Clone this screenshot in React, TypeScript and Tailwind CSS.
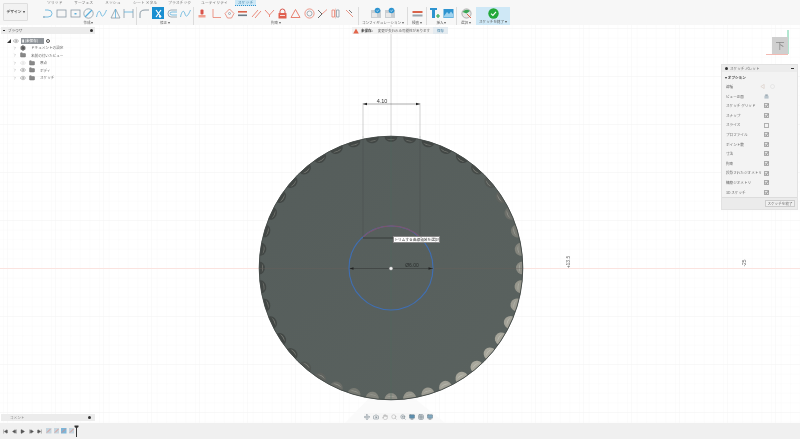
import React from 'react';
import { ChevronRight, Eye, Settings, Folder, Play, SkipBack, SkipForward, StepBack, StepForward, Hand, Search, ZoomIn, Monitor, Grid3x3, Move, Camera } from 'lucide-react';

const font = { fontFamily: '"Noto Sans CJK JP", "Liberation Sans", sans-serif' };
const BLUE = '#59aedb';
const GREY = '#8a9aa5';
const RED = '#e8806f';

const Ico: React.FC<{ children: React.ReactNode; className?: string }> = ({ children, className }) => (
  <svg viewBox="0 0 11 11" className={`w-[11px] h-[11px] shrink-0 ${className || ''}`} fill="none" strokeWidth="0.8">
    {children}
  </svg>
);

const createIcons = [
  <><path d="M0 9H5Q9 9 9 5.5T5 2H2" stroke={BLUE} /><path d="M0 9h2" stroke={GREY} /></>,
  <rect x="1" y="2" width="9" height="7" stroke={GREY} />,
  <><rect x="1" y="2" width="9" height="7" stroke={GREY} /><rect x="4.5" y="5" width="2" height="1.5" fill={BLUE} /></>,
  <><circle cx="5.5" cy="5.5" r="4.7" stroke={GREY} /><path d="M2 9L9 2" stroke={BLUE} strokeWidth="1.2" /></>,
  <path d="M0.5 9C2 2 4 2 5 6S8 8 10.5 2" stroke={BLUE} />,
  <><path d="M5.5 1L10 10H1Z" stroke={GREY} /><path d="M5.5 1V10" stroke={BLUE} /></>,
  <><path d="M1 1V10M10 1V10" stroke={GREY} /><path d="M1 4H10" stroke={BLUE} /></>,
];

const modifyIcons = [
  <path d="M1 10V6Q1 2 6 2H10" stroke={GREY} strokeWidth="1" />,
  <><path d="M3 2L8 9M8 2L3 9" stroke="#fff" strokeWidth="1.2" /><circle cx="7" cy="8.5" r="1.2" fill="#fff" /></>,
  <><path d="M10 2H4Q1 2 1 5.5T4 9H10" stroke={GREY} /><path d="M10 4H5Q3 4 3 5.5T5 7H10" stroke={BLUE} /></>,
  <path d="M0.5 9C2 2 4 2 5 6S8 8 10.5 2" stroke={BLUE} />,
];

const constraintIcons = [
  <><rect x="3.5" y="1.5" width="3" height="5" rx="1" fill="#d9534a" /><rect x="1.5" y="7" width="7" height="2.5" fill="#f0a090" /></>,
  <path d="M2 1V9.5H10" stroke={RED} />,
  <><path d="M5.5 1L10 5.5L7.5 10H3.5L1 5.5Z" stroke={RED} /><circle cx="5.5" cy="5.5" r="1" stroke={GREY} /></>,
  <><rect x="1" y="3" width="9" height="1.6" fill="#d9634a" /><rect x="1" y="6.5" width="9" height="1.6" fill="#6a7a85" /></>,
  <path d="M1 9L7 2M4 10L10 3" stroke={RED} strokeWidth="0.9" />,
  <path d="M1 2L5.5 7L10 2M5.5 7V9" stroke={RED} strokeWidth="0.9" />,
  <><path d="M3 5V3.5a2.5 2.5 0 0 1 5 0V5" stroke="#d9534a" strokeWidth="1" /><rect x="1.5" y="5" width="8" height="5.5" rx="0.6" fill="#e0604f" /><rect x="3" y="7" width="5" height="0.8" fill="#fff" /></>,
  <path d="M5.5 1.5L10 9.5H1Z" stroke={RED} strokeWidth="1" />,
  <><circle cx="5.5" cy="5.5" r="4.6" stroke={RED} /><circle cx="5.5" cy="5.5" r="2.5" stroke={GREY} /></>,
  <><path d="M1 2L5 6L1 10" stroke="#444" /><path d="M5 6L10 1.5" stroke={RED} /></>,
  <><path d="M2 2H4.5V9H2Z" stroke={RED} /><path d="M6.5 2H9V9H6.5Z" stroke={GREY} /><path d="M5.5 0.5V10.5" stroke={RED} strokeWidth="0.4" /></>,
  <><path d="M2 2L9 9" stroke={RED} /><path d="M5 2L8 5" stroke="#555" /></>,
];

const ConfigIcon: React.FC = () => (
  <svg viewBox="0 0 12 12" className="w-[12px] h-[12px] shrink-0">
    <rect x="1" y="3" width="10" height="8" fill="#c9ced2" />
    <rect x="2" y="6" width="5" height="4" fill="#e8e8e8" />
    <circle cx="7.5" cy="3.5" r="2.8" fill="#2e94d0" />
    <path d="M6.3 3.5l1 1 1.5-1.8" stroke="#fff" strokeWidth="0.6" fill="none" />
  </svg>
);

const Group: React.FC<{ label: string; className: string; children: React.ReactNode }> = ({ label, className, children }) => (
  <div className={`flex flex-col items-center shrink-0 ${className}`}>
    <div className="flex items-center h-[12px] gap-[2.3px]">{children}</div>
    <div className="text-[3.6px] leading-[6px] text-[#666] mt-[1px] whitespace-nowrap">{label} ▾</div>
  </div>
);

const Divider = () => <div className="w-px h-[18px] bg-[#dcdcdc] shrink-0" />;

const Toolbar: React.FC = () => (
  <div className="h-[25px] bg-[#f7f7f7] flex shrink-0">
    <div className="w-[25px] h-[18px] mt-[3px] ml-[3px] bg-[#f2f2f2] border border-[#dedede] rounded-[1px] flex items-center justify-center text-[3.8px] text-[#555] font-bold shrink-0">
      デザイン ▾
    </div>
    <div className="flex flex-col">
      <div className="h-[6px] flex text-[3.9px] leading-[5px] text-[#777] whitespace-nowrap">
        <span className="ml-[19px] w-[27px]">ソリッド</span>
        <span className="w-[31px]">サーフェス</span>
        <span className="w-[28px]">メッシュ</span>
        <span className="w-[35px]">シート メタル</span>
        <span className="w-[33px]">プラスチック</span>
        <span className="w-[34px]">ユーティリティ</span>
        <span className="w-[21px] text-center bg-[#cde8f6] text-[#3a7ea5] border-b border-dotted border-[#2e94d0]">スケッチ</span>
      </div>
      <div className="flex items-start mt-[1px] ml-[15px]">
        <Group label="作成" className="w-[91px] mr-[2px]">
          {createIcons.map((c, i) => <Ico key={i}>{c}</Ico>)}
        </Group>
        <Divider />
        <Group label="修正" className="w-[54px] mx-[1px]">
          {modifyIcons.map((c, i) =>
            i === 1 ? (
              <div key={i} className="bg-[#1a8fd1] w-[12px] h-[12px] flex items-center justify-center shrink-0"><Ico>{c}</Ico></div>
            ) : (
              <Ico key={i}>{c}</Ico>
            )
          )}
        </Group>
        <Divider />
        <Group label="拘束" className="w-[164px]">
          {constraintIcons.map((c, i) => <Ico key={i}>{c}</Ico>)}
        </Group>
        <Divider />
        <Group label="コンフィギュレーション" className="w-[48px]">
          <ConfigIcon />
          <ConfigIcon />
        </Group>
        <Divider />
        <Group label="検査" className="w-[18px]">
          <svg viewBox="0 0 11 11" className="w-[11px] h-[11px]">
            <rect x="0.5" y="3" width="10" height="2" fill="#d9634a" />
            <rect x="0.5" y="6.5" width="10" height="2" fill="#9aa5ad" />
          </svg>
        </Group>
        <Divider />
        <Group label="挿入" className="w-[29px]">
          <svg viewBox="0 0 12 12" className="w-[12px] h-[12px]">
            <path d="M1 1H8V3H6V11H3V3H1Z" fill="#2e94d0" />
            <path d="M9 7V11M7 9H11" stroke="#2ea84f" strokeWidth="1.2" />
          </svg>
          <svg viewBox="0 0 11 11" className="w-[11px] h-[11px]">
            <rect x="0.5" y="1" width="10" height="9" fill="#2e94d0" />
            <path d="M1 8L4 4L6 6L8 3.5L10 6V9.5H1Z" fill="#9fd3ef" />
          </svg>
        </Group>
        <Divider />
        <Group label="選択" className="w-[18px]">
          <svg viewBox="0 0 11 11" className="w-[11px] h-[11px]">
            <circle cx="5.5" cy="5.5" r="4.6" fill="#e8e8e8" stroke="#888" strokeWidth="0.6" />
            <path d="M1.5 4Q5 0 9 3L5.5 5.5Z" fill="#3aa655" />
            <path d="M6 6L10 10" stroke="#d9634a" strokeWidth="1" />
          </svg>
        </Group>
        <div className="w-[34px] h-[19px] ml-[1px] bg-[#cfe8f6] flex flex-col items-center shrink-0">
          <svg viewBox="0 0 11 11" className="w-[11px] h-[11px] mt-[1px]">
            <circle cx="5.5" cy="5.5" r="5.2" fill="#22a83a" />
            <path d="M3 5.6L4.9 7.4L8 3.8" stroke="#fff" strokeWidth="1.1" fill="none" />
          </svg>
          <div className="text-[3.6px] leading-[6px] text-[#555] whitespace-nowrap">スケッチを終了 ▾</div>
        </div>
      </div>
    </div>
  </div>
);

const treeRows = [
  { label: 'ドキュメントの設定', eye: false, icon: 'gear' },
  { label: '名前の付いたビュー', eye: false, icon: 'folder' },
  { label: '原点', eye: true, icon: 'folder', off: true },
  { label: 'ボディ', eye: true, icon: 'folder' },
  { label: 'スケッチ', eye: true, icon: 'folder' },
];

const Browser: React.FC = () => (
  <div className="absolute left-[1px] top-[2px] w-[94px] text-[3.6px] text-[#666]">
    <div className="h-[7px] bg-[#ececec] flex items-center justify-between px-[2px]">
      <span className="flex items-center gap-[3px]"><span className="w-[2px] h-[1px] bg-[#333]" />ブラウザ</span>
      <span className="w-[3px] h-[3px] rounded-full bg-[#333]" />
    </div>
    <div className="flex items-center h-[7px] mt-[3px] ml-[6px] gap-[2px]">
      <span className="text-[4px] text-[#333]">◢</span>
      <Eye size={6} strokeWidth={1.5} className="text-[#666]" />
      <span className="h-[6px] w-[23px] bg-[#8f9499] text-white flex items-center px-[1px] whitespace-nowrap">▮ (未保存)</span>
      <span className="w-[4px] h-[4px] rounded-full border border-[#555]" />
    </div>
    {treeRows.map((r) => (
      <div key={r.label} className="flex items-center h-[7.5px] ml-[12px] gap-[3px] whitespace-nowrap">
        <ChevronRight size={4} strokeWidth={2} className="text-[#777] shrink-0" />
        {r.eye && <Eye size={6} strokeWidth={1.5} className={r.off ? 'text-[#ccc] shrink-0' : 'text-[#666] shrink-0'} />}
        {r.icon === 'gear' ? (
          <Settings size={6} className="text-[#444] fill-[#777] shrink-0" />
        ) : (
          <Folder size={6} className="text-[#777] fill-[#888] shrink-0" />
        )}
        <span className="ml-[2px]">{r.label}</span>
      </div>
    ))}
  </div>
);

const paletteRows = ['ビュー正面', 'スケッチ グリッド', 'スナップ', 'スライス', 'プロファイル', 'ポイント数', '寸法', '拘束', '投影されたジオメトリ', '構築ジオメトリ', '3D スケッチ'];

const Check: React.FC<{ off?: boolean }> = ({ off }) => (
  <svg viewBox="0 0 6 6" className="w-[5px] h-[5px]">
    <rect x="0.4" y="0.4" width="5.2" height="5.2" rx="0.6" fill={off ? '#f2f2f2' : '#e6e6e6'} stroke="#555" strokeWidth="0.6" />
    {!off && <path d="M1.5 3L2.7 4.2L4.8 1.6" stroke="#333" strokeWidth="0.7" fill="none" />}
  </svg>
);

const Palette: React.FC = () => (
  <div className="absolute right-[2px] top-[39px] w-[77px] bg-[#f3f3f3] border border-[#e2e2e2] text-[3.6px] text-[#666]">
    <div className="h-[7px] bg-[#ececec] flex items-center justify-between px-[3px]">
      <span className="flex items-center gap-[1px]"><span className="w-[3px] h-[3px] rounded-full bg-[#333] mr-[1px]" />スケッチ パレット</span>
      <span className="w-[3px] h-[1px] bg-[#333]" />
    </div>
    <div className="h-[9px] mt-[1px] px-[3px] flex items-center font-bold text-[#444]">▾ オプション</div>
    <div className="flex flex-col px-[4px]">
      <div className="h-[9.6px] flex items-center justify-between">
        <span>線種</span>
        <span className="flex items-center gap-[5px] mr-[18px]">
          <svg viewBox="0 0 6 6" className="w-[5px] h-[5px]"><path d="M5 0.5L1 3L5 5.5Z" fill="none" stroke="#d8c8c0" strokeWidth="0.7" /></svg>
          <svg viewBox="0 0 6 6" className="w-[5px] h-[5px]"><circle cx="3" cy="3" r="2.4" fill="none" stroke="#ddd" strokeWidth="0.7" /></svg>
        </span>
      </div>
      {paletteRows.map((r, i) => (
        <div key={r} className="h-[9.6px] flex items-center justify-between whitespace-nowrap">
          <span>{r}</span>
          <span className="mr-[24px]">
            {i === 0 ? (
              <svg viewBox="0 0 6 6" className="w-[5px] h-[5px]"><rect x="0.5" y="2" width="5" height="3.5" fill="#b8c4cc" /><rect x="1.5" y="0.6" width="3" height="1.5" fill="#8a9aa5" /></svg>
            ) : (
              <Check off={i === 3} />
            )}
          </span>
        </div>
      ))}
    </div>
    <div className="h-[12px] bg-[#ebebeb] border-t border-[#dcdcdc] flex items-center justify-end px-[2px]">
      <div className="w-[30px] h-[7px] border border-[#ccc] bg-[#f0f0f0] flex items-center justify-center whitespace-nowrap">スケッチを終了</div>
    </div>
  </div>
);

const CX = 391;
const CY = 243;
const R = 132;

const mix = (a: number[], b: number[], t: number) =>
  `rgb(${a.map((v, i) => Math.round(v + (b[i] - v) * t)).join(',')})`;

// scallops round the rim, lit from the lower right
const notches = Array.from({ length: 44 }, (_, i) => {
  const a = (i * 360) / 44;
  const rad = ((a - 90) * Math.PI) / 180;
  const lit = Math.max(0, Math.cos(((a - 135) * Math.PI) / 180) + 0.1) / 1.1;
  const size = 5.5 + lit * 1.5;
  return { a, rad, lit, size };
});

const Scene: React.FC = () => (
  <svg className="absolute inset-0 w-full h-full" viewBox="0 0 800 398">
    <defs>
      <pattern id="minor" width="9.6" height="9.6" patternUnits="userSpaceOnUse" x="3" y="3">
        <path d="M9.6 0H0V9.6" fill="none" stroke="#f7f7f7" strokeWidth="0.6" />
      </pattern>
      <pattern id="major" width="48" height="48" patternUnits="userSpaceOnUse" x="7" y="3">
        <path d="M48 0H0V48" fill="none" stroke="#f0f0f0" strokeWidth="0.7" />
      </pattern>
      <linearGradient id="disc" x1="0" y1="0" x2="1" y2="1">
        <stop offset="0" stopColor="#555d5b" />
        <stop offset="1" stopColor="#5a625f" />
      </linearGradient>
    </defs>
    <rect width="800" height="398" fill="#fff" />
    <rect width="800" height="398" fill="url(#minor)" />
    <rect width="800" height="398" fill="url(#major)" />
    <path d="M0 243.5H800" stroke="#fbe3df" strokeWidth="1" />
    <path d="M391 0V111" stroke="#c8c8c8" strokeWidth="0.7" />
    <path d="M345 398L380 362H400L445 398Z" fill="#fafafa" />

    <circle cx={CX} cy={CY} r={R} fill="url(#disc)" />
    {notches.map((n) => {
      const x = CX + (R - 0.6) * Math.cos(n.rad);
      const y = CY + (R - 0.6) * Math.sin(n.rad);
      return (
        <g key={n.a} transform={`translate(${x} ${y}) rotate(${n.a})`}>
          <path
            d={`M-6.5 -0.2A6.5 ${n.size} 0 0 0 6.5 -0.2Z`}
            fill={mix([66, 71, 69], [168, 167, 156], n.lit)}
          />
          <path
            d="M-4.5 2.2Q0 4.8 4.5 2.2Q0 3.4 -4.5 2.2Z"
            fill={mix([120, 122, 116], [190, 190, 180], n.lit)}
          />
        </g>
      );
    })}
    <circle cx={CX} cy={CY} r={R - 0.2} fill="none" stroke="#434846" strokeWidth="0.9" />

    <path d="M391 111V375" stroke="#4f6b5c" strokeWidth="0.5" />
    <path d="M259 243.5H523" stroke="#6b5f5c" strokeWidth="0.4" />
    <path d="M363 111V213M420 111V213" stroke="#434948" strokeWidth="0.4" />
    <path d="M363 111V78M420 111V78" stroke="#bdbdbd" strokeWidth="0.7" />
    <path d="M363 79H420" stroke="#555" strokeWidth="0.5" />
    <path d="M363 79l4-1.2v2.4ZM420 79l-4-1.2v2.4Z" fill="#222" />
    <text x="382" y="78" fontSize="5.5" textAnchor="middle" fill="#333" fontFamily="Liberation Sans">4.10</text>

    <circle cx={CX} cy={CY} r="42" fill="none" stroke="#3f6fb5" strokeWidth="1.1" />
    <path d="M363 212A42 42 0 0 1 420 212" fill="none" stroke="#7a5670" strokeWidth="1.1" />
    <path d="M363 213H420" stroke="#333836" strokeWidth="0.9" />
    <path d="M350 243.5H433" stroke="#3a3f3e" strokeWidth="0.7" />
    <path d="M349.5 243.5l4-1.2v2.4ZM432.5 243.5l-4-1.2v2.4Z" fill="#222" />
    <text x="412" y="241.5" fontSize="5" textAnchor="middle" fill="#2a2e2d" fontFamily="Liberation Sans">Ø6.00</text>
    <circle cx={CX} cy="243.5" r="1.8" fill="#f0f0f0" stroke="#777" strokeWidth="0.4" />

    <text transform="translate(570 237) rotate(-90)" fontSize="5" textAnchor="middle" fill="#666" fontFamily="Liberation Sans">+13.5</text>
    <text transform="translate(746 238) rotate(-90)" fontSize="5" textAnchor="middle" fill="#666" fontFamily="Liberation Sans">-25</text>

    <path d="M788 5V29" stroke="#3fc28a" strokeWidth="0.8" />
    <path d="M766 29.5H788" stroke="#f0a8a0" strokeWidth="0.8" />
  </svg>
);

const App: React.FC = () => (
  <div className="w-[800px] h-[439px] flex flex-col overflow-hidden bg-white blur-[0.35px]" style={font}>
    <Toolbar />
    <div className="relative flex-1">
      <Scene />
      <Browser />
      <div className="absolute left-[352px] top-[2px] h-[7px] w-[96px] bg-[#f2f2f2] flex items-center text-[3.5px] text-[#666] whitespace-nowrap">
        <svg viewBox="0 0 6 6" className="w-[6px] h-[6px] ml-[1px] mr-[2px]"><path d="M3 0.5L5.8 5.5H0.2Z" fill="#e2654a" /></svg>
        <span className="font-bold mr-[5px] text-[#444]">未保存:</span>
        <span>変更が失われる可能性があります</span>
        <span className="ml-auto w-[15px] h-full bg-[#e4ebf0] text-[#3a7ea5] flex items-center justify-center">保存</span>
      </div>
      <div className="absolute left-[772px] top-[12px] w-[16px] h-[17px] bg-[#cfcfcf] flex items-center justify-center text-[9px] text-[#888]">下</div>
      <Palette />
      <div className="absolute left-[393px] top-[211px] w-[47px] h-[7px] bg-white border border-[#888] flex items-center justify-center text-[3.7px] text-[#333] whitespace-nowrap">
        トリムする曲線領域を選択
      </div>
      <div className="absolute left-[1px] bottom-[2px] w-[94px] h-[7px] bg-[#ececec] flex items-center justify-between px-[9px] pr-[4px] text-[3.6px] text-[#888]">
        <span>コメント</span>
        <span className="w-[3px] h-[3px] rounded-full bg-[#333]" />
      </div>
      <div className="absolute left-[364px] bottom-[3px] h-[7px] flex items-center gap-[3px] text-[#6a7a85] bg-[#f6f6f6]">
        <Move size={6} />
        <Camera size={6} />
        <Hand size={6} className="text-[#aaa]" />
        <Search size={6} className="text-[#aaa]" />
        <ZoomIn size={6} />
        <Monitor size={6} className="fill-[#5a8fb0]" />
        <Grid3x3 size={6} />
        <Monitor size={6} className="fill-[#7fa8c0]" />
      </div>
    </div>
    <div className="h-[16px] bg-[#f0f0f0] flex items-center shrink-0 pl-[3px] text-[#555]">
      <SkipBack size={5} className="fill-[#555] mr-[3.5px]" />
      <StepBack size={5} className="fill-[#555] mr-[3.5px]" />
      <Play size={5} className="fill-[#555] mr-[3.5px]" />
      <StepForward size={5} className="fill-[#555] mr-[3.5px]" />
      <SkipForward size={5} className="fill-[#555] mr-[4px]" />
      <div className="flex gap-[2px] items-center">
        {['#c5d5df', '#c5d5df', '#7db5d8', '#c5d5df'].map((c, i) => (
          <svg key={i} viewBox="0 0 6 6" className="w-[5.5px] h-[5.5px]">
            <rect width="6" height="6" fill={c} />
            <path d="M1 5L5 1" stroke="#e8806f" strokeWidth="0.8" />
          </svg>
        ))}
      </div>
      <svg viewBox="0 0 5 12" className="w-[5px] h-[12px]">
        <path d="M0.5 0.5H4.5V2L3 3V12H2V3L0.5 2Z" fill="#333" />
      </svg>
    </div>
  </div>
);

export default App;
